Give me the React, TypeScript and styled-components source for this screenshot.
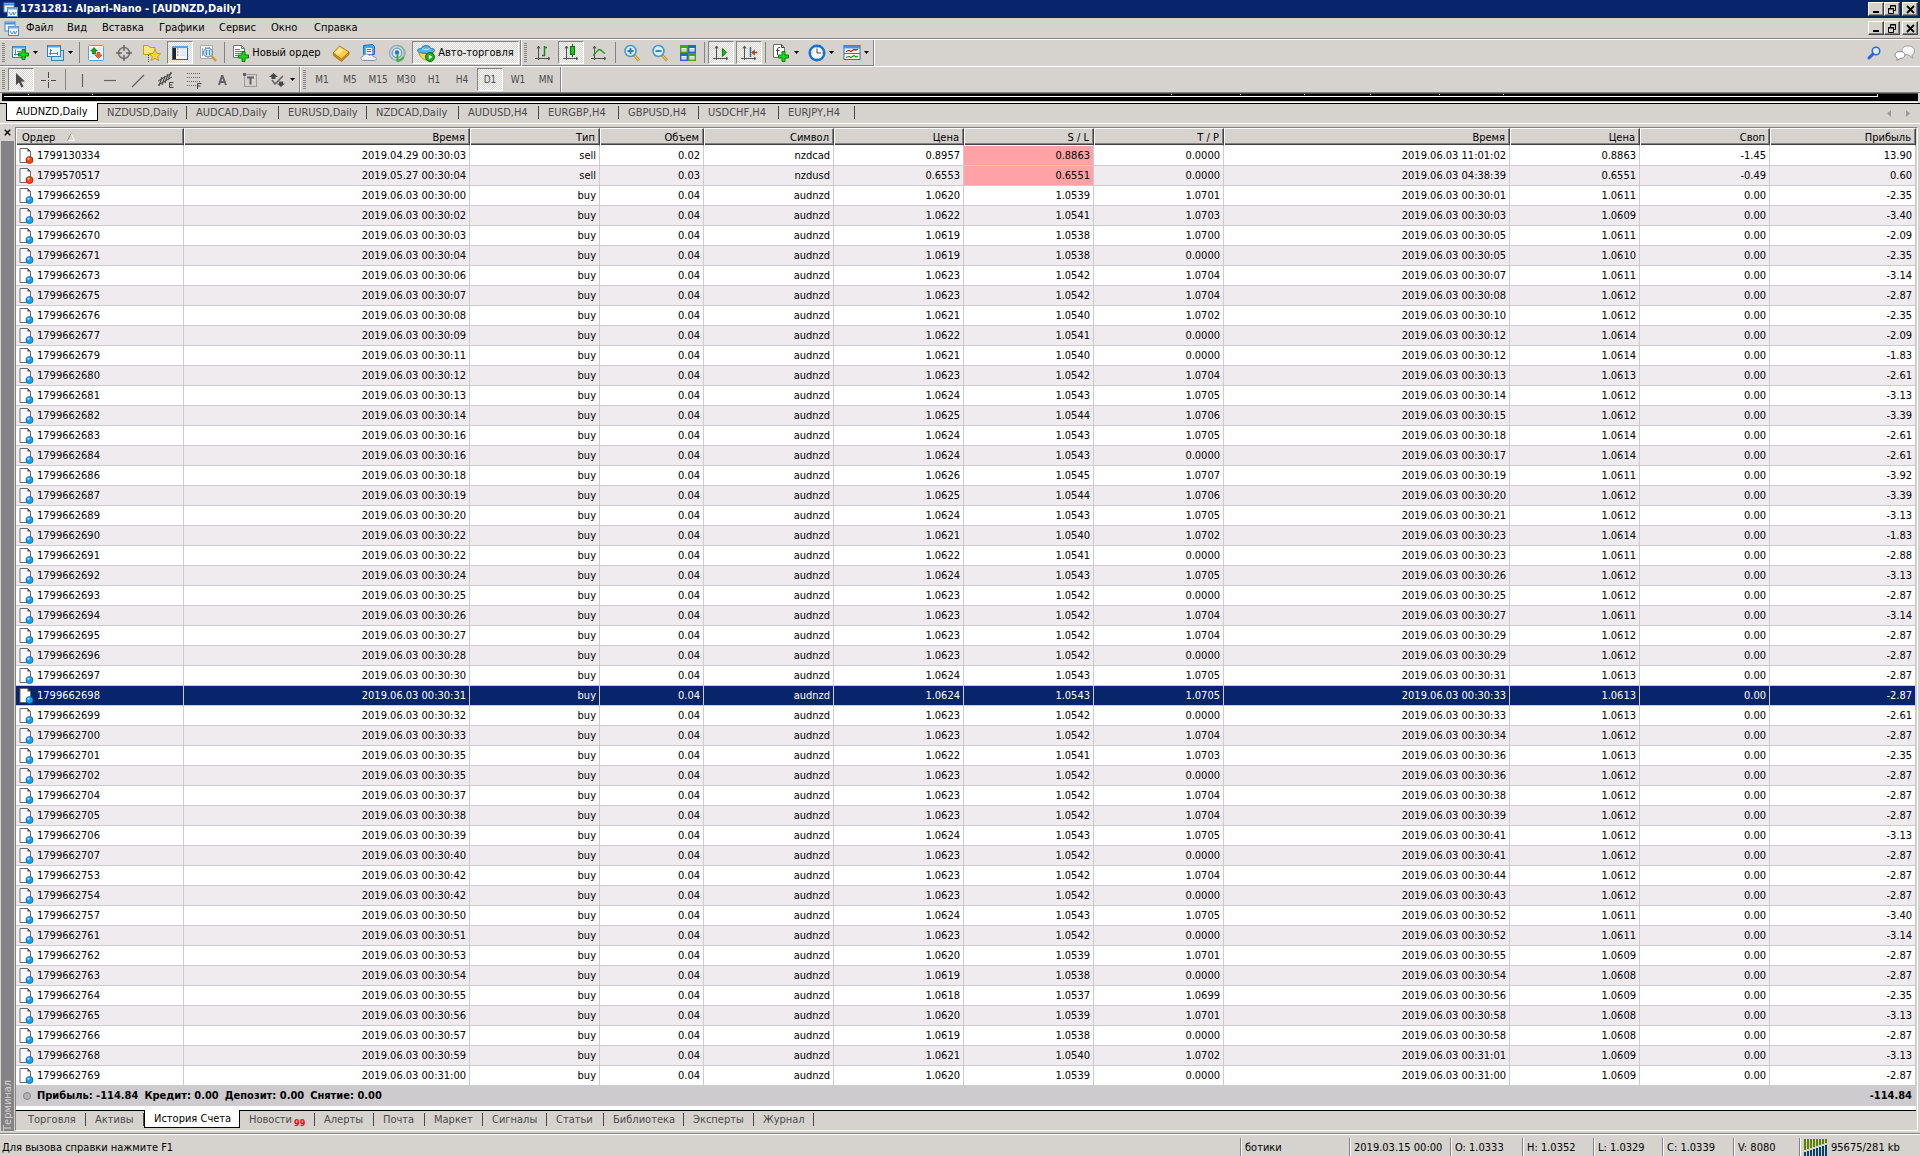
import React from "react";
import styled, { createGlobalStyle, css } from "styled-components";

const c = {
  face: "#d6d3ce",
  shadow: "#848284",
  dark: "#424142",
  light: "#ffffff",
  navy: "#08246b",
  alt: "#efebef",
  grid: "#cecbce",
  muted: "#4a494a",
  pink: "#ffa2a5",
};

const Global = createGlobalStyle`
  * { box-sizing: border-box; }
  body {
    margin: 0;
    background: ${c.face};
    color: #000;
    font: 11px/14px "DejaVu Sans Condensed", "Noto Sans", "Liberation Sans", sans-serif;
  }
  button { font: inherit; color: inherit; background: none; border: 0; padding: 0; margin: 0; white-space: nowrap; }
  svg { display: block; flex: none; }
`;

const checker = css`
  background: repeating-conic-gradient(#ffffff 0 25%, ${c.face} 0 50%) 0 0 / 2px 2px;
`;

const Shell = styled.div`
  display: flex;
  flex-direction: column;
  min-height: 100vh;
`;

/* ---------- title and menu ---------- */
const TitleBar = styled.header`
  display: flex;
  align-items: center;
  height: 18px;
  padding: 0 2px 0 3px;
  gap: 2px;
  background: ${c.navy};
  color: #fff;
`;
const Title = styled.h1`
  flex: 1;
  margin: 0;
  font-size: 11px;
  line-height: 14px;
  font-weight: bold;
`;
const MenuBar = styled.nav`
  display: flex;
  align-items: center;
  height: 21px;
  padding: 0 2px 0 4px;
  border-bottom: 1px solid ${c.shadow};
`;
const MenuItems = styled.div`
  display: flex;
  flex: 1;
`;
const MenuItem = styled.button<{ $w: number }>`
  width: ${(p) => p.$w}px;
  padding-left: 7px;
  text-align: left;
`;
const WindowButtons = styled.div`
  display: flex;
`;
const WindowButton = styled.button`
  display: grid;
  place-items: center;
  width: 16px;
  height: 14px;
  background: ${c.face};
  color: #000;
  border: 1px solid ${c.light};
  border-right-color: ${c.dark};
  border-bottom-color: ${c.dark};
  box-shadow: inset -1px -1px 0 ${c.shadow};
  &:last-child { margin-left: 2px; }
`;

/* ---------- toolbars ---------- */
const ToolRow = styled.div<{ $last?: boolean }>`
  display: flex;
  height: ${(p) => (p.$last ? 26 : 27)}px;
  border-top: 1px solid ${c.light};
`;
const ToolGroup = styled.div<{ $flat?: boolean }>`
  display: flex;
  align-items: center;
  gap: 2px;
  padding: 0 1px 0 2px;
  border-right: 1px solid ${c.shadow};
  border-bottom: ${(p) => (p.$flat ? "0" : `1px solid ${c.shadow}`)};
  box-shadow: 1px 0 0 ${c.light};
  & + & { margin-left: 1px; }
`;
const ToolRest = styled.div`
  flex: 1;
  display: flex;
  align-items: center;
  justify-content: flex-end;
  gap: 5px;
  padding-right: 2px;
`;
const Grip = styled.span`
  width: 3px;
  height: 19px;
  margin-right: 1px;
  background: repeating-linear-gradient(${c.shadow} 0 1px, transparent 1px 2px);
`;
const Split = styled.span`
  width: 1px;
  height: 21px;
  margin: 0 1px;
  background: ${c.shadow};
`;
const Tool = styled.button<{ $w?: number; $on?: boolean }>`
  display: flex;
  align-items: center;
  justify-content: center;
  gap: 3px;
  width: ${(p) => p.$w ?? 26}px;
  height: 23px;
  border: 1px solid transparent;
  ${(p) =>
    p.$on &&
    css`
      ${checker}
      border-color: ${c.shadow} ${c.light} ${c.light} ${c.shadow};
    `}
`;
const Period = styled(Tool)`
  color: ${c.muted};
  font-size: 10px;
`;

/* ---------- lower edge of the chart window ---------- */
const ChartEdge = styled.div`
  height: 12px;
  padding: 0 2px;
  border-top: 1px solid ${c.shadow};
  border-bottom: 1px solid #000;
`;
const ChartBlack = styled.div`
  height: 8px;
  padding: 0 40px 0 2px;
  background: #000;
  border-top: 1px solid ${c.dark};
  box-shadow: 0 1px 0 ${c.face}, 0 2px 0 ${c.light};
`;
const ChartAxis = styled.div`
  position: relative;
  height: 3px;
  border-bottom: 1px solid #fff;
  border-right: 1px solid #fff;
`;
const Tick = styled.i`
  position: absolute;
  top: 0;
  width: 1px;
  height: 1px;
  background: #fff;
`;

/* ---------- tab strips ---------- */
const TabStrip = styled.div<{ $top?: boolean }>`
  display: flex;
  height: ${(p) => (p.$top ? 20 : 19)}px;
  padding-left: ${(p) => (p.$top ? 6 : 3)}px;
  border-bottom: ${(p) => (p.$top ? `1px solid ${c.light}` : "0")};
`;
const Tab = styled.button<{ $w: number; $on?: boolean }>`
  display: flex;
  align-items: center;
  width: ${(p) => p.$w}px;
  height: 17px;
  padding: 0 0 0 9px;
  color: ${c.muted};
  ${(p) =>
    p.$on
      ? css`
          background: #fff;
          color: #000;
          height: 18px;
          margin-top: -1px;
          border: solid #000;
          border-width: 0 1px 1px;
        `
      : css`
          &::after {
            content: "";
            width: 1px;
            height: 13px;
            margin-left: auto;
            background: ${c.muted};
          }
        `}
`;
const TabArrows = styled.div`
  display: flex;
  align-items: center;
  gap: 14px;
  margin-left: auto;
  padding-right: 9px;
`;
const Badge = styled.sup`
  align-self: flex-end;
  margin-left: 2px;
  color: #f00;
  font-size: 9px;
  line-height: 9px;
  font-weight: bold;
`;

/* ---------- terminal ---------- */
const Terminal = styled.section`
  display: flex;
  padding: 3px 2px 2px 1px;
`;
const SideStrip = styled.aside`
  display: flex;
  flex-direction: column;
  width: 13px;
  margin-right: 1px;
`;
const CloseButton = styled.button`
  display: grid;
  place-items: center;
  height: 14px;
  padding-bottom: 4px;
`;
const SideLabel = styled.div`
  flex: 1;
  background: ${c.shadow};
  color: ${c.face};
  writing-mode: vertical-rl;
  transform: rotate(180deg);
  line-height: 14px;
`;
const Panel = styled.div`
  flex: 1;
  min-width: 0;
  padding-right: 1px;
  border: solid ${c.shadow};
  border-width: 1px 0 1px 1px;
  border-bottom-color: ${c.light};
  border-right: 1px solid ${c.light};
`;
const Grid = styled.table`
  width: 100%;
  table-layout: fixed;
  border-collapse: separate;
  border-spacing: 0;
  background: #fff;
`;
const Col = styled.col<{ $w?: number }>`
  width: ${(p) => (p.$w ? `${p.$w}px` : "auto")};
`;
const Th = styled.th<{ $left?: boolean }>`
  height: 18px;
  padding: 0 4px 0 5px;
  font-weight: normal;
  text-align: ${(p) => (p.$left ? "left" : "right")};
  line-height: 13px;
  background: ${c.face};
  border: 1px solid ${c.light};
  border-right-color: ${c.dark};
  box-shadow: inset 0 -1px 0 ${c.dark}, inset -1px -2px 0 ${c.shadow};
`;
const SortButton = styled.button`
  display: flex;
  align-items: center;
  gap: 12px;
  height: 13px;
`;
const Tr = styled.tr<{ $on?: boolean }>`
  &:nth-child(even) { background: ${c.alt}; }
  ${(p) =>
    p.$on &&
    css`
      && { background: ${c.navy}; color: #fff; }
    `}
`;
const Td = styled.td<{ $hit?: boolean }>`
  height: 20px;
  padding: 0 3px;
  text-align: right;
  white-space: nowrap;
  border-right: 1px solid ${c.grid};
  border-bottom: 1px solid ${c.grid};
  ${(p) => p.$hit && css`background: ${c.pink}; background-clip: padding-box;`}
`;
const OrderCell = styled.span`
  display: flex;
  align-items: center;
  gap: 3px;
`;
const Summary = styled.div`
  display: flex;
  align-items: center;
  gap: 6px;
  height: 20px;
  padding: 0 4px 0 7px;
  font-weight: bold;
  background: ${c.grid};
`;
const SummaryTotal = styled.span`
  margin-left: auto;
`;
const SummaryDot = styled.i`
  width: 8px;
  height: 8px;
  border: 1px solid ${c.shadow};
  border-radius: 50%;
  background: #b5b2b5;
`;
const PanelFoot = styled.div`
  height: 5px;
  background: #fff;
  border-bottom: 1px solid #000;
`;

/* ---------- status bar ---------- */
const StatusBar = styled.footer`
  display: flex;
  flex: 1;
  align-items: center;
  min-height: 24px;
  padding: 4px 0 0 2px;
  border-top: 1px solid ${c.shadow};
  box-shadow: inset 0 1px 0 ${c.light};
`;
const StatusHint = styled.span`
  flex: 1;
`;
const StatusCell = styled.span<{ $w: number }>`
  display: flex;
  align-items: center;
  gap: 4px;
  width: ${(p) => p.$w}px;
  height: 19px;
  padding-left: 4px;
  border-left: 1px solid ${c.shadow};
  box-shadow: inset 1px 0 0 ${c.light};
`;

/* ---------- icons ---------- */
type IconProps = { w?: number; h?: number; children: React.ReactNode };
const Icon = ({ w = 18, h = 18, children }: IconProps) => (
  <svg width={w} height={h} viewBox={`0 0 ${w} ${h}`} aria-hidden="true">
    {children}
  </svg>
);
const Caret = () => (
  <Icon w={5} h={3}>
    <path d="M0 0h5L2.500 3z" fill="#000" />
  </Icon>
);
const Plus = ({ x = 7, y = 7 }: { x?: number; y?: number }) => (
  <path
    transform={`translate(${x} ${y})`}
    d="M4 .5h3V4h3.500v3H7v3.500H4V7H.5V4H4z"
    fill="#18d718"
    stroke="#088208"
  />
);
const AppIcon = () => (
  <Icon w={15} h={15}>
    <rect x="1" y="1" width="10" height="9" fill="#eff7ff" stroke="#4a8ad6" />
    <path d="M1 2.500h10" stroke="#4a8ad6" strokeWidth="2" />
    <rect x="4.500" y="5.500" width="10" height="9" fill="#eff7ff" stroke="#4a8ad6" />
    <path d="M4.500 6.500h10" stroke="#73aae7" strokeWidth="2" />
    <path d="M6 10l2 3 2-3 1 3 2-3" fill="none" stroke="#5a8ac6" />
  </Icon>
);
const NewChartIcon = () => (
  <Icon>
    <rect x=".5" y="2.500" width="13" height="11" fill="#eff7ff" stroke="#397db5" />
    <path d="M1 3.500h12" stroke="#5aa2de" strokeWidth="2" />
    <path d="M3.500 5.500v6M2 10.500h5M5 7.500h4" stroke="#5282a5" fill="none" />
    <Plus x={6} y={5} />
  </Icon>
);
const ProfilesIcon = () => (
  <Icon>
    <rect x="4.500" y="6.500" width="12" height="10" fill="#bddbf7" stroke="#397db5" />
    <rect x=".5" y="1.500" width="13" height="11" fill="#eff7ff" stroke="#397db5" />
    <path d="M1 2.500h12" stroke="#5aa2de" strokeWidth="2" />
    <path d="M3.500 5v6M2 9.500h9M10.500 8v3M3 6.500h2" stroke="#5282a5" />
  </Icon>
);
const MarketIcon = () => (
  <Icon>
    <rect x="1.500" y="1.500" width="15" height="15" rx="1" fill="#f7fbff" stroke="#5aa2de" />
    <path d="M7 3.500l3.500 3.500h-2v3h-3V7h-2z" fill="#18a218" stroke="#086508" strokeWidth=".6" />
    <path d="M11.500 14.500L8 11h2V8.500h3V11h2z" fill="#ff6129" stroke="#b52800" strokeWidth=".6" />
    <path d="M11 4h4M12 6h3M3 13h4" stroke="#cedbe7" />
  </Icon>
);
const CrosshairIcon = () => (
  <Icon>
    <circle cx="9" cy="9" r="5.500" fill="none" stroke="#737173" strokeWidth="1.500" />
    <path d="M9 1v6M9 11v6M1 9h6M11 9h6" stroke="#636163" strokeWidth="1.500" />
  </Icon>
);
const FolderStarIcon = () => (
  <Icon>
    <path d="M.5 3V1.500h5l1.500 2h5v7H.5z" fill="#ffe773" stroke="#c69a21" />
    <path d="M5.500 11v7" stroke="#424142" strokeDasharray="1 1" />
    <path d="M12 5.500l1.700 3.800 4 .4-3 2.700.9 4.100-3.600-2.200-3.600 2.200.9-4.100-3-2.700 4-.4z" fill="#ffd739" stroke="#bd8a10" strokeWidth=".8" />
  </Icon>
);
const NavigatorIcon = () => (
  <Icon>
    <rect x="1.500" y="2.500" width="15" height="13" fill="#f7fbff" stroke="#2161ad" />
    <path d="M1 3h16" stroke="#5aa2e7" strokeWidth="2" />
    <path d="M2 4h3v11H2z" fill="#212421" />
    <path d="M6 5h1.500M6 8h1.500M6 11h1.500" stroke="#d62829" />
    <path d="M9 5h6M9 8h6M9 11h6" stroke="#bdd3e7" />
  </Icon>
);
const TesterIcon = () => (
  <Icon>
    <path d="M1.500 1.500h12v13h-12z" fill="#f7f7f7" stroke="#adaaad" />
    <path d="M3.500 4v8M6.500 3v9M10.500 3v9" stroke="#84a2c6" />
    <circle cx="9" cy="8.500" r="4.500" fill="#bddff7" fillOpacity=".85" stroke="#4a82b5" />
    <path d="M7.500 6v5M10.500 6v5" stroke="#5282b5" />
    <path d="M12.500 12l4.500 5" stroke="#d69a29" strokeWidth="2.500" />
  </Icon>
);
const NewOrderIcon = () => (
  <Icon w={16}>
    <path d="M.5 1.500h8l3 3v9H.5z" fill="#fff" stroke="#737173" />
    <path d="M8.500 1.500v3h3M2 5.500h5M2 7.500h7M2 9.500h7M2 11.500h4" stroke="#737173" fill="none" />
    <Plus x={5} y={7} />
  </Icon>
);
const BookIcon = () => (
  <Icon>
    <path d="M1 9l1 3 7.500 5.500 7.500-7L17 8l-8 6.500z" fill="#d69218" stroke="#9c6508" strokeWidth=".8" />
    <path d="M1 9l6.500-7L17 8l-7.500 7z" fill="#ffcf4a" stroke="#9c6d08" strokeWidth=".8" />
    <path d="M3 8.500L7.500 3.500l4 2.500-5 5z" fill="#ffe794" />
  </Icon>
);
const VpsIcon = () => (
  <Icon>
    <path d="M3.500 1.500l9-1 2 2v8h-11z" fill="#42aaf7" stroke="#1871bd" />
    <path d="M6 4h6v6H6z" fill="#fff" />
    <path d="M7 5.500h4M7 7.500h4" stroke="#1879c6" />
    <path d="M4 16.500c-4 0-4-4-.8-4.200 1-3 5-3 6-.8 2-1.500 4-.2 4 1.200 4 0 4 3.800.8 3.800z" fill="#eff3f7" stroke="#8492a5" />
  </Icon>
);
const SignalsIcon = () => (
  <Icon>
    <circle cx="9" cy="9" r="7.500" fill="none" stroke="#94b2ce" strokeWidth="1.500" />
    <path d="M9 1.500a7.500 7.500 0 0 1 3 14.500" fill="none" stroke="#8cba8c" strokeWidth="1.500" />
    <circle cx="9" cy="9" r="4.800" fill="#dee7ef" stroke="#7ba2c6" strokeWidth="1.300" />
    <circle cx="9" cy="8.500" r="2.200" fill="#2979bd" />
    <path d="M9.500 10v7c3-.5 5-2 6-4" stroke="#42aa42" strokeWidth="2" fill="none" />
  </Icon>
);
const AutoIcon = () => (
  <Icon>
    <path d="M2 8h14c0 5-4 8-7 8S2 12 2 8z" fill="#ffd75a" stroke="#b58a18" />
    <path d="M.5 6.500c0-2 3-2 4-2C5 .5 13 .5 13.500 4.500c1 0 4 0 4 2s-5 3-8.500 3-8.500-1-8.500-3z" fill="#5ab2e7" stroke="#2175ad" />
    <path d="M5 4.500c2 1.500 6 1.500 8 0" stroke="#cee7f7" fill="none" />
    <circle cx="13" cy="13" r="4.500" fill="#18b218" stroke="#087108" />
    <path d="M11.800 10.500v5l3.500-2.500z" fill="#fff" />
  </Icon>
);
const Axes = () => (
  <path d="M4.500 2v14M1 14.500h15M3 4.500l1.500-2.500L6 4.500M14 13l2 1.500-2 1.500" stroke="#525152" fill="none" />
);
const BarsIcon = () => (
  <Icon>
    <Axes />
    <path d="M10.500 2v10M10 3.500h3M8 11.500h3" stroke="#108a10" strokeWidth="1.500" fill="none" />
  </Icon>
);
const CandleIcon = () => (
  <Icon>
    <Axes />
    <path d="M10.500 0v13" stroke="#087508" />
    <rect x="8.500" y="2.500" width="4" height="8" fill="#18c718" stroke="#087508" />
  </Icon>
);
const LineIcon = () => (
  <Icon>
    <Axes />
    <path d="M3 11.500C7 9 7 5.500 9.500 5.500c2 0 3 3 5.500 4" stroke="#219a21" strokeWidth="1.300" fill="none" />
  </Icon>
);
const Lens = ({ plus }: { plus?: boolean }) => (
  <Icon>
    <path d="M11 11l5 5.500" stroke="#c69a29" strokeWidth="3" />
    <path d="M11 11l5 5.500" stroke="#f7db6b" strokeWidth="1" />
    <circle cx="7.500" cy="7" r="5.500" fill="#d6efff" stroke="#4a92ce" strokeWidth="1.500" />
    <path d={plus ? "M4.500 7h6M7.500 4v6" : "M4.500 7h6"} stroke="#2979b5" strokeWidth="1.800" />
  </Icon>
);
const TilesIcon = () => (
  <Icon>
    <path d="M1 1h8v8H1zM9 9h8v8H9z" fill="#4aa210" />
    <path d="M9 1h8v8H9zM1 9h8v8H1z" fill="#2961ce" />
    <path d="M2.500 4h5v3.500h-5zM10.500 4h5v3.500h-5zM2.500 12h5v3.500h-5zM10.500 12h5v3.500h-5z" fill="#f7fbff" />
    <path d="M3 6h4M11 6h4M3 14h4M11 14h4" stroke="#a5b2c6" />
  </Icon>
);
const ScrollIcon = () => (
  <Icon>
    <Axes />
    <path d="M10.500 4.500v8l4-4z" fill="#29b229" stroke="#088208" />
  </Icon>
);
const ShiftIcon = () => (
  <Icon>
    <Axes />
    <path d="M10.500 3v10" stroke="#1871a5" strokeWidth="1.500" />
    <path d="M11.500 8.500l3-2.500v2h2.500v1h-2.500v2z" fill="#c63910" stroke="#a52800" strokeWidth=".5" />
  </Icon>
);
const IndicatorsIcon = () => (
  <Icon>
    <path d="M.5.5h8l3 3v10H.5z" fill="#fff" stroke="#737173" />
    <path d="M8.500.5v3h3M7 3.500c-2-.5-2.500 1-2.500 2.500v5M3 6.500h3.500" stroke="#424142" fill="none" />
    <Plus x={5} y={7} />
  </Icon>
);
const ClockIcon = () => (
  <Icon>
    <circle cx="9" cy="9" r="7.300" fill="#f7fbff" stroke="#1871ce" strokeWidth="2.400" />
    <path d="M9 4.500V9h4" stroke="#424142" fill="none" />
    <path d="M9 3v1M9 14v1M3.500 9h1M14 9h1" stroke="#848284" />
  </Icon>
);
const TemplateIcon = () => (
  <Icon>
    <rect x="1" y="1.500" width="16" height="14" fill="#f7fbff" stroke="#2971bd" />
    <path d="M1 3h16" stroke="#4a92de" strokeWidth="3" />
    <path d="M1 9.500h16" stroke="#2971bd" />
    <path d="M3 7.500l3-1 2 1 3-2 2 .5 2-1" stroke="#9c3018" strokeWidth="1.300" fill="none" />
    <path d="M3 13.500l3-1 2 1 3-2 2 1.500 2-1" stroke="#219a21" strokeWidth="1.300" fill="none" />
  </Icon>
);
const SearchIcon = () => (
  <Icon w={14} h={14}>
    <circle cx="9" cy="5" r="3.800" fill="#dfebfb" stroke="#2969d6" strokeWidth="1.500" />
    <path d="M6 8L2 12" stroke="#2969d6" strokeWidth="3" strokeLinecap="round" />
  </Icon>
);
const ChatIcon = () => (
  <Icon w={22} h={16}>
    <path d="M14 1c4 0 6.500 2 6.500 4.500S19 10 18 10l.5 3-3.500-3C10 10 8 8 8 5.500S10 1 14 1z" fill="#f7f7f7" stroke="#9c9a9c" />
    <path d="M6 6.500c3 0 5 1.500 5 3.500s-2 3.500-5 3.500L3 15.500v-2.500C1.500 12.500 1 11 1 10c0-2 2-3.500 5-3.500z" fill="#fff" stroke="#8c8a8c" />
  </Icon>
);
const CursorIcon = () => (
  <Icon>
    <path d="M4 2l9 8.500H9l2.500 5-2 1-2.500-5L4 14z" fill="#4a494a" />
  </Icon>
);
const PlusThinIcon = () => (
  <Icon>
    <path d="M8.500 1v6M8.500 11v6M1 9.500h5M11 9.500h5M8 9.500h1" stroke="#4a494a" />
  </Icon>
);
const Stroke = ({ d }: { d: string }) => (
  <Icon>
    <path d={d} stroke="#636163" strokeWidth="1.200" fill="none" />
  </Icon>
);
const BoldA = () => (
  <Icon>
    <path d="M6 14L9 5h.500l3.500 9M7 11h5" stroke="#636163" strokeWidth="2" fill="none" />
  </Icon>
);
const ChannelIcon = () => (
  <Icon>
    <path d="M1 10L15 2M1 14L15 6" stroke="#4a494a" fill="none" />
    <path d="M2 15l3-9M5 14l3-9M8 12l3-9M11 9l3-8" stroke="#4a494a" strokeWidth="1.200" fill="none" />
    <path d="M16.500 11.500h-4v5h4M12.500 14h3" stroke="#424142" fill="none" />
  </Icon>
);
const FiboIcon = () => (
  <Icon>
    <path d="M2 2.500h14M2 6.500h14M2 10.500h14M2 14.500h9" stroke="#636163" strokeDasharray="1 1" />
    <path d="M16.500 12.500h-4V18M12.500 15h3" stroke="#424142" fill="none" />
  </Icon>
);
const LabelFrame = () => (
  <Icon>
    <rect x="3.500" y="3.500" width="12" height="12" fill="none" stroke="#636163" strokeDasharray="1 1" />
    <path d="M2 2h3v3H2z" fill="#636163" />
    <path d="M6 6.500h7M9.500 6.500v7" stroke="#636163" strokeWidth="2" />
  </Icon>
);
const ArrowsIcon = () => (
  <Icon>
    <path d="M4.500 2L9 6H6.500v2h-4V6H0z" fill="#4a494a" />
    <path d="M3 9l3 4 8-8" stroke="#636163" strokeWidth="1.500" fill="none" />
    <path d="M12 16l-4-3.500h2v-2h4v2h2z" fill="#4a494a" />
  </Icon>
);
const DocIcon = ({ color, edge }: { color: string; edge: string }) => (
  <Icon w={15} h={16}>
    <path d="M1 .5h7.500l3 3V14.500H1z" fill="#fff" stroke="#6b696b" />
    <path d="M8.500 0v3.500H12z" fill="#4a494a" />
    <circle cx="10.500" cy="12" r="3.500" fill={color} stroke={edge} strokeWidth=".8" />
    <circle cx="9.500" cy="10.800" r="1" fill="#fff" fillOpacity=".8" />
  </Icon>
);
const SortIcon = () => (
  <Icon w={8} h={8}>
    <path d="M4 .5L.5 7.500h7z" fill="none" stroke="#fff" />
    <path d="M4 .5L.5 7.500" stroke="#848284" />
  </Icon>
);
const MinIcon = () => (
  <Icon w={10} h={9}>
    <path d="M2 6h6v2H2z" fill="#000" />
  </Icon>
);
const RestoreIcon = () => (
  <Icon w={10} h={9}>
    <path d="M3.500 3V.5h5v5H6.500M3 1h6M1.500 3.500h5v5h-5zM1 4h6" stroke="#000" fill="none" />
  </Icon>
);
const XIcon = ({ s = 9 }: { s?: number }) => (
  <svg width={s} height={s} viewBox="0 0 9 9" aria-hidden="true">
    <path d="M1 1l7 7M8 1L1 8" stroke="#000" strokeWidth="1.800" />
  </svg>
);
const LinkIcon = () => (
  <Icon w={23} h={18}>
    {[0, 1, 2, 3, 4, 5, 6, 7].map((i) => (
      <g key={i}>
        <path d={`M${i * 3} 0h2v${11 - i}h-2z`} fill="#5a8200" />
        <path d={`M${i * 3} ${13 - i}h2V17h-2z`} fill="#08416b" />
      </g>
    ))}
  </Icon>
);

/* ---------- data ---------- */
const menu: [string, number][] = [
  ["Файл", 41], ["Вид", 35], ["Вставка", 57], ["Графики", 60], ["Сервис", 52], ["Окно", 43], ["Справка", 58],
];
const chartTabs: [string, number][] = [
  ["AUDNZD,Daily", 92], ["NZDUSD,Daily", 89], ["AUDCAD,Daily", 92], ["EURUSD,Daily", 88], ["NZDCAD,Daily", 92],
  ["AUDUSD,H4", 80], ["EURGBP,H4", 80], ["GBPUSD,H4", 80], ["USDCHF,H4", 80], ["EURJPY,H4", 76],
];
const bottomTabs: [string, number][] = [
  ["Торговля", 67], ["Активы", 58], ["История Счета", 96], ["Новости", 75], ["Алерты", 59], ["Почта", 51],
  ["Маркет", 58], ["Сигналы", 64], ["Статьи", 57], ["Библиотека", 80], ["Эксперты", 70], ["Журнал", 60],
];
const periods = ["M1", "M5", "M15", "M30", "H1", "H4", "D1", "W1", "MN"];
const ticks = [24, 88, 1167, 1236, 1300, 1366, 1435, 1499];
const headers = ["Время", "Тип", "Объем", "Символ", "Цена", "S / L", "T / P", "Время", "Цена", "Своп", "Прибыль"];
const columns = [168, 286, 130, 104, 130, 130, 130, 130, 286, 130, 130, undefined];

const d = "2019.06.03 00:";
/* order | opened | open price | s/l | t/p | closed | close price | profit */
const buys = `
659 30:00 1.0620 1.0539 1.0701 30:01 1.0611 -2.35
662 30:02 1.0622 1.0541 1.0703 30:03 1.0609 -3.40
670 30:03 1.0619 1.0538 1.0700 30:05 1.0611 -2.09
671 30:04 1.0619 1.0538 0.0000 30:05 1.0610 -2.35
673 30:06 1.0623 1.0542 1.0704 30:07 1.0611 -3.14
675 30:07 1.0623 1.0542 1.0704 30:08 1.0612 -2.87
676 30:08 1.0621 1.0540 1.0702 30:10 1.0612 -2.35
677 30:09 1.0622 1.0541 0.0000 30:12 1.0614 -2.09
679 30:11 1.0621 1.0540 0.0000 30:12 1.0614 -1.83
680 30:12 1.0623 1.0542 1.0704 30:13 1.0613 -2.61
681 30:13 1.0624 1.0543 1.0705 30:14 1.0612 -3.13
682 30:14 1.0625 1.0544 1.0706 30:15 1.0612 -3.39
683 30:16 1.0624 1.0543 1.0705 30:18 1.0614 -2.61
684 30:16 1.0624 1.0543 0.0000 30:17 1.0614 -2.61
686 30:18 1.0626 1.0545 1.0707 30:19 1.0611 -3.92
687 30:19 1.0625 1.0544 1.0706 30:20 1.0612 -3.39
689 30:20 1.0624 1.0543 1.0705 30:21 1.0612 -3.13
690 30:22 1.0621 1.0540 1.0702 30:23 1.0614 -1.83
691 30:22 1.0622 1.0541 0.0000 30:23 1.0611 -2.88
692 30:24 1.0624 1.0543 1.0705 30:26 1.0612 -3.13
693 30:25 1.0623 1.0542 0.0000 30:25 1.0612 -2.87
694 30:26 1.0623 1.0542 1.0704 30:27 1.0611 -3.14
695 30:27 1.0623 1.0542 1.0704 30:29 1.0612 -2.87
696 30:28 1.0623 1.0542 0.0000 30:29 1.0612 -2.87
697 30:30 1.0624 1.0543 1.0705 30:31 1.0613 -2.87
698 30:31 1.0624 1.0543 1.0705 30:33 1.0613 -2.87
699 30:32 1.0623 1.0542 0.0000 30:33 1.0613 -2.61
700 30:33 1.0623 1.0542 1.0704 30:34 1.0612 -2.87
701 30:35 1.0622 1.0541 1.0703 30:36 1.0613 -2.35
702 30:35 1.0623 1.0542 0.0000 30:36 1.0612 -2.87
704 30:37 1.0623 1.0542 1.0704 30:38 1.0612 -2.87
705 30:38 1.0623 1.0542 1.0704 30:39 1.0612 -2.87
706 30:39 1.0624 1.0543 1.0705 30:41 1.0612 -3.13
707 30:40 1.0623 1.0542 0.0000 30:41 1.0612 -2.87
753 30:42 1.0623 1.0542 1.0704 30:44 1.0612 -2.87
754 30:42 1.0623 1.0542 0.0000 30:43 1.0612 -2.87
757 30:50 1.0624 1.0543 1.0705 30:52 1.0611 -3.40
761 30:51 1.0623 1.0542 0.0000 30:52 1.0611 -3.14
762 30:53 1.0620 1.0539 1.0701 30:55 1.0609 -2.87
763 30:54 1.0619 1.0538 0.0000 30:54 1.0608 -2.87
764 30:55 1.0618 1.0537 1.0699 30:56 1.0609 -2.35
765 30:56 1.0620 1.0539 1.0701 30:58 1.0608 -3.13
766 30:57 1.0619 1.0538 0.0000 30:58 1.0608 -2.87
768 30:59 1.0621 1.0540 1.0702 31:01 1.0609 -3.13
769 31:00 1.0620 1.0539 0.0000 31:00 1.0609 -2.87`
  .trim()
  .split("\n")
  .map((line) => {
    const [id, t1, p, sl, tp, t2, p2, profit] = line.split(" ");
    return ["1799662" + id, d + t1, "buy", "0.04", "audnzd", p, sl, tp, d + t2, p2, "0.00", profit];
  });
const orders = [
  ["1799130334", "2019.04.29 00:30:03", "sell", "0.02", "nzdcad", "0.8957", "0.8863", "0.0000", "2019.06.03 11:01:02", "0.8863", "-1.45", "13.90"],
  ["1799570517", "2019.05.27 00:30:04", "sell", "0.03", "nzdusd", "0.6553", "0.6551", "0.0000", "2019.06.03 04:38:39", "0.6551", "-0.49", "0.60"],
  ...buys,
];

const Controls = () => (
  <WindowButtons>
    <WindowButton aria-label="Свернуть"><MinIcon /></WindowButton>
    <WindowButton aria-label="Восстановить"><RestoreIcon /></WindowButton>
    <WindowButton aria-label="Закрыть"><XIcon /></WindowButton>
  </WindowButtons>
);

type BtnProps = { label: string; on?: boolean; drop?: boolean; children: React.ReactNode };
const Btn = ({ label, on, drop, children }: BtnProps) => (
  <Tool aria-label={label} $on={on} $w={drop ? 33 : 26}>
    {children}
    {drop && <Caret />}
  </Tool>
);

export default function App() {
  return (
    <Shell>
      <Global />
      <TitleBar>
        <AppIcon />
        <Title>1731281: Alpari-Nano - [AUDNZD,Daily]</Title>
        <Controls />
      </TitleBar>
      <MenuBar>
        <AppIcon />
        <MenuItems>
          {menu.map(([m, w]) => (
            <MenuItem key={m} $w={w}>{m}</MenuItem>
          ))}
        </MenuItems>
        <Controls />
      </MenuBar>

      <ToolRow>
        <ToolGroup>
          <Grip />
          <Btn label="Новый график" drop><NewChartIcon /></Btn>
          <Btn label="Профили" drop><ProfilesIcon /></Btn>
          <Split />
          <Btn label="Обзор рынка"><MarketIcon /></Btn>
          <Btn label="Окно данных"><CrosshairIcon /></Btn>
          <Btn label="Навигатор"><FolderStarIcon /></Btn>
          <Btn label="Терминал" on><NavigatorIcon /></Btn>
          <Btn label="Тестер стратегий"><TesterIcon /></Btn>
          <Split />
          <Tool $w={98}><NewOrderIcon />Новый ордер</Tool>
          <Btn label="MetaEditor"><BookIcon /></Btn>
          <Btn label="Хостинг"><VpsIcon /></Btn>
          <Btn label="Сигналы"><SignalsIcon /></Btn>
          <Tool $w={107} $on><AutoIcon />Авто-торговля</Tool>
        </ToolGroup>
        <ToolGroup>
          <Grip />
          <Btn label="Бары"><BarsIcon /></Btn>
          <Btn label="Свечи" on><CandleIcon /></Btn>
          <Btn label="Линия"><LineIcon /></Btn>
          <Split />
          <Btn label="Увеличить"><Lens plus /></Btn>
          <Btn label="Уменьшить"><Lens /></Btn>
          <Btn label="Окна мозаикой"><TilesIcon /></Btn>
          <Split />
          <Btn label="Автопрокрутка" on><ScrollIcon /></Btn>
          <Btn label="Сдвиг графика" on><ShiftIcon /></Btn>
          <Split />
          <Btn label="Индикаторы" drop><IndicatorsIcon /></Btn>
          <Btn label="Периоды" drop><ClockIcon /></Btn>
          <Btn label="Шаблоны" drop><TemplateIcon /></Btn>
        </ToolGroup>
        <ToolRest>
          <Btn label="Поиск"><SearchIcon /></Btn>
          <Btn label="Чат"><ChatIcon /></Btn>
        </ToolRest>
      </ToolRow>
      <ToolRow $last>
        <ToolGroup $flat>
          <Grip />
          <Btn label="Курсор" on><CursorIcon /></Btn>
          <Btn label="Перекрестие"><PlusThinIcon /></Btn>
          <Split />
          <Btn label="Вертикальная линия"><Stroke d="M9.500 3v13" /></Btn>
          <Btn label="Горизонтальная линия"><Stroke d="M3 9.500h12" /></Btn>
          <Btn label="Трендовая линия"><Stroke d="M3 16L15 4" /></Btn>
          <Btn label="Канал"><ChannelIcon /></Btn>
          <Btn label="Фибоначчи"><FiboIcon /></Btn>
          <Btn label="Текст"><BoldA /></Btn>
          <Btn label="Метка"><LabelFrame /></Btn>
          <Btn label="Стрелки" drop><ArrowsIcon /></Btn>
        </ToolGroup>
        <ToolGroup $flat>
          <Grip />
          {periods.map((p) => (
            <Period key={p} $on={p === "D1"}>{p}</Period>
          ))}
        </ToolGroup>
      </ToolRow>

      <ChartEdge>
        <ChartBlack>
          <ChartAxis>
            {ticks.map((x) => (
              <Tick key={x} style={{ left: x }} />
            ))}
          </ChartAxis>
        </ChartBlack>
      </ChartEdge>
      <TabStrip $top>
        {chartTabs.map(([t, w], i) => (
          <Tab key={t} $w={w} $on={i === 0}>{t}</Tab>
        ))}
        <TabArrows>
          <Icon w={5} h={7}><path d="M4 0v7L0 3.500z" fill="#9c9a9c" /></Icon>
          <Icon w={5} h={7}><path d="M0 0v7l4-3.500z" fill="#9c9a9c" /></Icon>
        </TabArrows>
      </TabStrip>

      <Terminal>
        <SideStrip>
          <CloseButton aria-label="Закрыть терминал"><XIcon s={7} /></CloseButton>
          <SideLabel>Терминал</SideLabel>
        </SideStrip>
        <Panel>
          <Grid>
            <colgroup>
              {columns.map((w, i) => (
                <Col key={i} $w={w} />
              ))}
            </colgroup>
            <thead>
              <tr>
                <Th $left><SortButton>Ордер<SortIcon /></SortButton></Th>
                {headers.map((h, i) => (
                  <Th key={i}>{h}</Th>
                ))}
              </tr>
            </thead>
            <tbody>
              {orders.map((row) => (
                <Tr key={row[0]} $on={row[0] === "1799662698"}>
                  {row.map((v, i) =>
                    i === 0 ? (
                      <Td key={i}>
                        <OrderCell>
                          {row[2] === "sell" ? (
                            <DocIcon color="#f74918" edge="#9c2000" />
                          ) : (
                            <DocIcon color="#18a2f7" edge="#0861a5" />
                          )}
                          {v}
                        </OrderCell>
                      </Td>
                    ) : (
                      <Td key={i} $hit={i === 6 && row[2] === "sell"}>{v}</Td>
                    )
                  )}
                </Tr>
              ))}
            </tbody>
          </Grid>
          <Summary>
            <SummaryDot />
            <span>Прибыль: -114.84</span>
            <span>Кредит: 0.00</span>
            <span>Депозит: 0.00</span>
            <span>Снятие: 0.00</span>
            <SummaryTotal>-114.84</SummaryTotal>
          </Summary>
          <PanelFoot />
          <TabStrip>
            {bottomTabs.map(([t, w]) => (
              <Tab key={t} $w={w} $on={t === "История Счета"}>
                {t}
                {t === "Новости" && <Badge>99</Badge>}
              </Tab>
            ))}
          </TabStrip>
        </Panel>
      </Terminal>

      <StatusBar>
        <StatusHint>Для вызова справки нажмите F1</StatusHint>
        <StatusCell $w={109}>ботики</StatusCell>
        <StatusCell $w={101}>2019.03.15 00:00</StatusCell>
        <StatusCell $w={72}>O: 1.0333</StatusCell>
        <StatusCell $w={71}>H: 1.0352</StatusCell>
        <StatusCell $w={69}>L: 1.0329</StatusCell>
        <StatusCell $w={71}>C: 1.0339</StatusCell>
        <StatusCell $w={66}>V: 8080</StatusCell>
        <StatusCell $w={121}><LinkIcon />95675/281 kb</StatusCell>
      </StatusBar>
    </Shell>
  );
}
